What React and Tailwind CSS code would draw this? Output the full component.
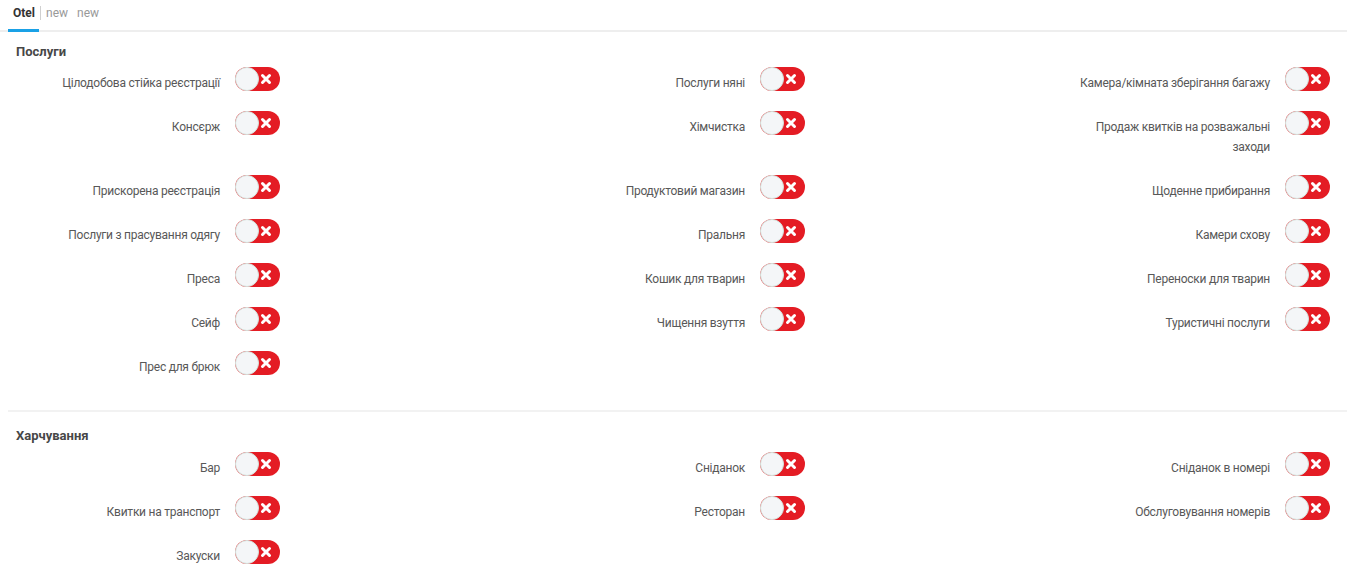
import React from "react";

const sections = [
  {
    title: "Послуги",
    rows: [
      ["Цілодобова стійка реєстрації", "Послуги няні", "Камера/кімната зберігання багажу"],
      ["Консєрж", "Хімчистка", "Продаж квитків на розважальні заходи"],
      ["Прискорена реєстрація", "Продуктовий магазин", "Щоденне прибирання"],
      ["Послуги з прасування одягу", "Пральня", "Камери схову"],
      ["Преса", "Кошик для тварин", "Переноски для тварин"],
      ["Сейф", "Чищення взуття", "Туристичні послуги"],
      ["Прес для брюк", null, null],
    ],
  },
  {
    title: "Харчування",
    rows: [
      ["Бар", "Сніданок", "Сніданок в номері"],
      ["Квитки на транспорт", "Ресторан", "Обслуговування номерів"],
      ["Закуски", null, null],
    ],
  },
];

const Toggle = () => (
  <div className="relative h-[24px] w-[45px] shrink-0 rounded-full bg-[#e41c24]">
    <div className="absolute left-0 top-0 h-[24px] w-[24px] rounded-full border border-[#d3e2dc] bg-[#f4f6f8]" />
    <svg
      className="absolute right-[8px] top-[6px] h-[12px] w-[12px]"
      viewBox="0 0 12 12"
      fill="none"
    >
      <path d="M2.5 2.5L9.5 9.5M9.5 2.5L2.5 9.5" stroke="#fff" strokeWidth="3" strokeLinecap="round" />
    </svg>
  </div>
);

const Item = ({ label }) => (
  <div className="flex items-start">
    <div className="w-[212px] pt-[7px] text-right text-[12px] leading-[20px] tracking-[-0.25px] text-[#585858]">
      {label}
    </div>
    <div className="ml-[15px] mt-[1px]">
      <Toggle />
    </div>
  </div>
);

export default function App() {
  return (
    <div className="min-h-[576px] bg-white font-['Roboto',sans-serif]">
      {/* tabs */}
      <div className="flex h-[32px] items-end border-b-2 border-[#eeeeee]">
        <div className="relative ml-[8px] flex items-center pb-[8px] text-[12px]">
          <span className="px-[5px] font-bold text-[#333]">Otel</span>
          <span className="h-[14px] w-px bg-[#d0d0d0]" />
          <span className="px-[5px] text-[#999]">new</span>
          <span className="px-[4px] text-[#999]">new</span>
          <div className="absolute -bottom-[2px] left-0 h-[3px] w-[31px] bg-[#1aa1e6]" />
        </div>
      </div>

      {sections.map((s, i) => (
        <div
          key={s.title}
          className={i === 0 ? "ml-[8px] border-b-2 border-[#f2f2f2] pt-[10px] pb-[16px]" : "ml-[8px] pt-[14px]"}
        >
          <div className="pl-[8px] text-[13px] font-bold leading-[20px] text-[#474747]">{s.title}</div>
          <div className={i === 0 ? "mt-[4px]" : "mt-[5px]"}>
            {s.rows.map((r, j) => (
              <div key={j} className="grid grid-cols-[525px_525px_1fr] pb-[17px]">
                {r.map((l, k) => (l ? <Item key={k} label={l} /> : <div key={k} />))}
              </div>
            ))}
          </div>
        </div>
      ))}
    </div>
  );
}
